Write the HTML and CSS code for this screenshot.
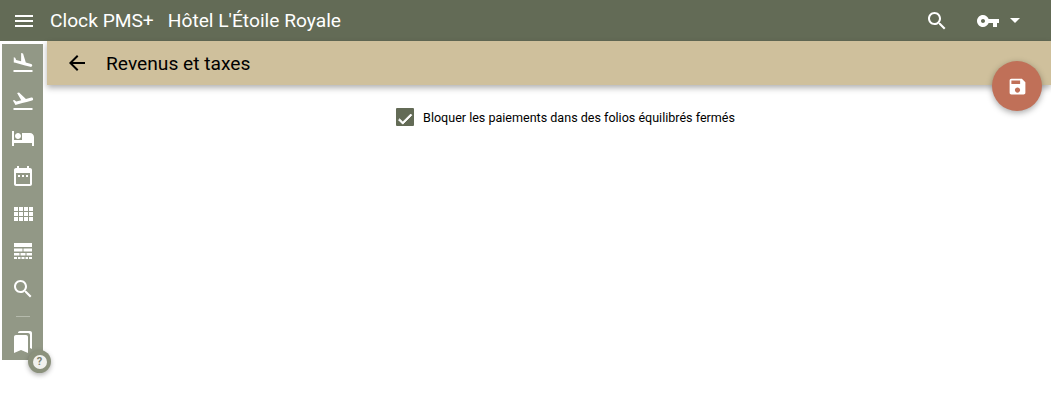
FILE: index.html
```html
<!DOCTYPE html>
<html lang="en">
<head>
  <meta charset="UTF-8" />
  <title>Revenus et taxes</title>
  <link rel="stylesheet" href="styles.css">
</head>
<body>
  <header class="topbar">
    <svg class="menu-icon" viewBox="0 0 24 24"><path d="M3 18h18v-2H3v2zm0-5h18v-2H3v2zm0-7v2h18V6H3z"/></svg>
    <span class="app-name">Clock PMS+</span>
    <span class="hotel-name">Hôtel L'Étoile Royale</span>
    <svg class="search-icon" viewBox="0 0 24 24"><path d="M15.5 14h-.79l-.28-.27C15.41 12.59 16 11.11 16 9.5 16 5.91 13.09 3 9.5 3S3 5.91 3 9.5 5.91 16 9.5 16c1.61 0 3.09-.59 4.23-1.57l.27.28v.79l5 4.99L20.49 19l-4.99-5zm-6 0C7.01 14 5 11.99 5 9.5S7.01 5 9.5 5 14 7.01 14 9.5 11.99 14 9.5 14z"/></svg>
    <svg class="key-icon" viewBox="0 0 24 24"><path d="M12.65 10C11.83 7.67 9.61 6 7 6c-3.31 0-6 2.69-6 6s2.69 6 6 6c2.61 0 4.83-1.67 5.65-4H17v4h4v-4h2v-4H12.65zM7 14c-1.1 0-2-.9-2-2s.9-2 2-2 2 .9 2 2-.9 2-2 2z"/></svg>
    <span class="caret"></span>
  </header>

  <div class="layout">
    <nav class="sidebar">
      <svg class="nav-icon" viewBox="0 0 24 24"><path d="M2.5 19h19v2h-19zm7.18-5.73l4.35 1.16 5.31 1.42c.8.21 1.62-.26 1.84-1.06.21-.8-.26-1.62-1.06-1.84l-5.31-1.42-2.76-9.02L10.12 2v8.28L5.15 8.95l-.93-2.32-1.45-.39v5.17l1.6.43 5.31 1.43z"/></svg>
      <svg class="nav-icon" viewBox="0 0 24 24"><path d="M2.5 19h19v2h-19zm19.57-9.36c-.21-.8-1.04-1.28-1.84-1.06L14.92 10l-6.9-6.43-1.93.51 4.14 7.17-4.97 1.33-1.97-1.54-1.45.39 1.82 3.16.77 1.33 1.6-.43 5.31-1.42 4.35-1.16L21 11.49c.81-.23 1.28-1.05 1.07-1.85z"/></svg>
      <svg class="nav-icon" viewBox="0 0 24 24"><path d="M7 13c1.66 0 3-1.34 3-3S8.66 7 7 7s-3 1.34-3 3 1.34 3 3 3zm12-6h-8v7H3V5H1v15h2v-3h18v3h2v-9c0-2.21-1.79-4-4-4z"/></svg>
      <svg class="nav-icon" viewBox="0 0 24 24"><path d="M9 11H7v2h2v-2zm4 0h-2v2h2v-2zm4 0h-2v2h2v-2zm2-7h-1V2h-2v2H8V2H6v2H5c-1.11 0-1.99.9-1.99 2L3 20c0 1.1.89 2 2 2h14c1.1 0 2-.9 2-2V6c0-1.1-.9-2-2-2zm0 16H5V9h14v11z"/></svg>
      <svg class="nav-icon" viewBox="0 0 24 24"><path d="M3 9h4V5H3v4zm0 5h4v-4H3v4zm5 0h4v-4H8v4zm5 0h4v-4h-4v4zM8 9h4V5H8v4zm5-4v4h4V5h-4zm5 9h4v-4h-4v4zM3 19h4v-4H3v4zm5 0h4v-4H8v4zm5 0h4v-4h-4v4zm5 0h4v-4h-4v4zm0-14v4h4V5h-4z"/></svg>
      <svg class="nav-icon" viewBox="0 0 24 24"><path d="M3 4h18v4H3zM3 9.500h8.500v3H3zM12.500 9.500H21v3h-8.500zM3 14h5.500v2.500H3zM9.500 14h5v2.500h-5zM15.500 14H21v2.500h-5.500zM3 18h3v2H3zM7 18h2.500v2H7zM10.500 18h3v2h-3zM14.500 18H17v2h-2.500zM18 18h3v2h-3z"/></svg>
      <svg class="nav-icon" viewBox="0 0 24 24"><path d="M15.5 14h-.79l-.28-.27C15.41 12.59 16 11.11 16 9.5 16 5.91 13.09 3 9.5 3S3 5.91 3 9.5 5.91 16 9.5 16c1.61 0 3.09-.59 4.23-1.57l.27.28v.79l5 4.99L20.49 19l-4.99-5zm-6 0C7.01 14 5 11.99 5 9.5S7.01 5 9.5 5 14 7.01 14 9.5 11.99 14 9.5 14z"/></svg>
      <div class="nav-divider"></div>
      <svg class="nav-icon" viewBox="0 0 24 24"><path d="M19 18l2 1V3c0-1.100-.9-2-2-2H8.990C7.890 1 7 1.900 7 3h10c1.100 0 2 .9 2 2v13zM15 5H5c-1.100 0-2 .9-2 2v16l7-3 7 3V7c0-1.100-.9-2-2-2z"/></svg>
      <span class="help-badge"><span class="help-mark">?</span></span>
    </nav>

    <main class="main">
      <div class="titlebar">
        <svg class="back-icon" viewBox="0 0 24 24"><path d="M20 11H7.830l5.590-5.590L12 4l-8 8 8 8 1.410-1.410L7.830 13H20v-2z"/></svg>
        <h1>Revenus et taxes</h1>
      </div>
      <button class="fab">
        <svg viewBox="0 0 24 24"><path d="M17 3H5c-1.110 0-2 .9-2 2v14c0 1.100.89 2 2 2h14c1.100 0 2-.9 2-2V7l-4-4zm-5 16c-1.660 0-3-1.340-3-3s1.340-3 3-3 3 1.340 3 3-1.340 3-3 3zm3-10H5V5h10v4z"/></svg>
      </button>
      <div class="content">
        <label class="check-row">
          <span class="checkbox">
            <svg viewBox="0 -2.500 24 24"><path d="M9 16.170L4.830 12l-1.420 1.410L9 19 21 7l-1.410-1.410z"/></svg>
          </span>
          Bloquer les paiements dans des folios équilibrés fermés
        </label>
      </div>
    </main>
  </div>
</body>
</html>
```

FILE: styles.css
```css
body {
  font-family: 'Roboto', sans-serif;
  margin: 0;
  min-height: 100vh;
  background-color: #fff;
}

svg {
  display: block;
  fill: #fff;
}

.topbar {
  height: 41px;
  background-color: #636b56;
  color: #fff;
  display: flex;
  align-items: center;
  padding-left: 12px;
  font-size: 19.2px;
}

.menu-icon {
  width: 24px;
  height: 24px;
  margin-right: 14px;
}

.app-name {
  margin-right: 14px;
}

.search-icon {
  width: 24px;
  height: 24px;
  margin-left: auto;
  margin-right: 27px;
}

.key-icon {
  width: 24px;
  height: 24px;
  margin-right: 10px;
}

.caret {
  width: 0;
  height: 0;
  border-left: 5px solid transparent;
  border-right: 5px solid transparent;
  border-top: 5px solid #fff;
  margin-right: 31px;
}

.layout {
  display: flex;
  align-items: flex-start;
}

.sidebar {
  position: relative;
  z-index: 1;
  width: 41px;
  height: 316px;
  margin: 3px 4px 0 2px;
  background-color: #929886;
  display: flex;
  flex-direction: column;
  align-items: center;
  padding-top: 7px;
  box-sizing: border-box;
}

.nav-icon {
  flex: none;
  width: 24px;
  height: 24px;
  margin-bottom: 13.7px;
}

.nav-divider {
  flex: none;
  width: 14px;
  height: 1px;
  background-color: #b5baac;
  margin: 1px 0 13px;
}

.help-badge {
  position: absolute;
  left: 26px;
  top: 306px;
  width: 23px;
  height: 23px;
  border-radius: 50%;
  background-color: #8b917c;
  box-shadow: 0 2px 5px rgba(0, 0, 0, 0.3);
  display: flex;
  align-items: center;
  justify-content: center;
}

.help-mark {
  width: 14px;
  height: 14px;
  border-radius: 50%;
  background-color: #f1f1ee;
  color: #7c8270;
  font-size: 11px;
  font-weight: 700;
  line-height: 14px;
  text-align: center;
}

.main {
  position: relative;
  flex: 1;
}

.titlebar {
  height: 44px;
  background-color: #cfc09c;
  box-shadow: 0 3px 6px rgba(0, 0, 0, 0.3);
  display: flex;
  align-items: center;
  padding-left: 18px;
}

.back-icon {
  width: 24px;
  height: 24px;
  fill: #000;
  margin-right: 17px;
}

h1 {
  font-size: 19.2px;
  font-weight: 400;
  margin: 0;
  color: #000;
}

.fab {
  position: absolute;
  right: 9px;
  top: 20px;
  width: 50px;
  height: 50px;
  border: none;
  border-radius: 50%;
  padding: 14.5px;
  background-color: #c07058;
  box-shadow: 0 2px 6px rgba(0, 0, 0, 0.35);
}

.content {
  display: flex;
  justify-content: center;
  padding: 23px 0 0 33px;
}

.check-row {
  display: flex;
  align-items: center;
  gap: 9px;
  font-size: 12.55px;
  color: #000;
}

.checkbox {
  width: 18px;
  height: 18px;
  background-color: #636b56;
  border-radius: 1px;
}

.checkbox svg {
  overflow: hidden;
}

.checkbox path {
  stroke: #fff;
  stroke-width: 1.2;
}
```
